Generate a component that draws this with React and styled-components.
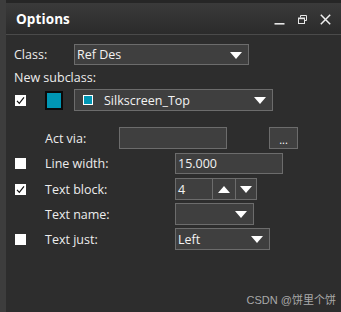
import styled, { createGlobalStyle } from 'styled-components'

const GlobalStyle = createGlobalStyle`
    html, body {
        margin: 0;
        padding: 0;
        background: #2d2d2d;
    }
    body {
        font-family: "Open Sans", "Noto Sans", sans-serif;
        font-size: 12.5px;
        color: #ececec;
    }
`

const Screen = styled.div`
    position: relative;
    display: flex;
    width: 341px;
    height: 312px;
    overflow: hidden;
`

const LeftRail = styled.div`
    width: 6px;
    background: #3d3d3d;
`

const Panel = styled.div`
    flex: 1;
    display: flex;
    flex-direction: column;
    background: #2d2d2d;
    border-top: 3px solid #262626;
`

const TitleBar = styled.div`
    height: 31px;
    display: flex;
    align-items: center;
    justify-content: space-between;
    padding: 0 10px 0 10px;
    background: linear-gradient(#3a3a3a, #2b2b2b);
    border-bottom: 1px solid #4a4a4a;
`

const Title = styled.h2`
    margin: 0;
    font-size: 13.5px;
    font-weight: 700;
    color: #ffffff;
    letter-spacing: 0.1px;
`

const TitleIcons = styled.div`
    display: flex;
    align-items: center;
    gap: 13px;
    padding-top: 2px;
`

const Body = styled.div`
    display: flex;
    flex-direction: column;
    padding: 9px 0 0 8px;
`

const Row = styled.div`
    display: flex;
    align-items: center;
    height: ${p => p.$h || 22}px;
    margin-top: ${p => p.$mt || 0}px;
`

const Label = styled.span`
    box-sizing: border-box;
    width: ${p => (p.$w ? `${p.$w}px` : 'auto')};
    padding-left: ${p => p.$indent || 0}px;
    flex-shrink: 0;
    white-space: nowrap;
`

const CheckCell = styled.div`
    width: 31px;
    flex-shrink: 0;
    display: flex;
    align-items: center;
    padding-left: 1px;
    box-sizing: border-box;
`

const CheckBox = styled.div`
    width: 11px;
    height: 11px;
    background: #ffffff;
    display: flex;
    align-items: center;
    justify-content: center;
`

const Swatch = styled.div`
    width: 14px;
    height: 15px;
    border: 2px solid #0a0a0a;
    background: #0096b4;
    margin-right: 11px;
`

const Field = styled.div`
    position: relative;
    box-sizing: border-box;
    width: ${p => p.$w}px;
    height: ${p => p.$h || 22}px;
    margin-left: ${p => p.$ml || 0}px;
    display: flex;
    align-items: center;
    background: #3f3f3f;
    border: 1px solid #6c6c6c;
    padding-left: 2px;
    color: #f2f2f2;
    font-size: 12.5px;
`

const Arrow = styled.span`
    position: absolute;
    right: 6px;
    top: 50%;
    margin-top: -3px;
    width: 0;
    height: 0;
    border-left: 6px solid transparent;
    border-right: 6px solid transparent;
    border-top: 7px solid #ffffff;
`

const LayerIcon = styled.span`
    width: 8px;
    height: 8px;
    border: 1px solid #ffffff;
    background: #0096b4;
    margin: 0 11px 0 6px;
`

const DotsButton = styled.div`
    box-sizing: border-box;
    width: 29px;
    height: 22px;
    margin-left: 42px;
    background: #404040;
    border: 1px solid #6c6c6c;
    display: flex;
    justify-content: center;
    align-items: flex-end;
    padding-bottom: 3px;
    font-size: 11px;
    line-height: 11px;
    color: #ffffff;
`

const Spinner = styled.div`
    box-sizing: border-box;
    display: flex;
    width: 82px;
    height: 22px;
    border: 1px solid #6c6c6c;
    background: #3f3f3f;
`

const SpinValue = styled.div`
    width: 37px;
    display: flex;
    align-items: center;
    padding-left: 2px;
    box-sizing: border-box;
    border-right: 1px solid #6c6c6c;
    font-size: 12.5px;
    color: #f2f2f2;
`

const SpinButton = styled.div`
    width: ${p => p.$w}px;
    display: flex;
    align-items: center;
    justify-content: center;
    border-right: ${p => (p.$last ? 'none' : '1px solid #6c6c6c')};
`

const Triangle = styled.span`
    width: 0;
    height: 0;
    border-left: 6px solid transparent;
    border-right: 6px solid transparent;
    ${p => (p.$up ? 'border-bottom: 7px solid #ffffff;' : 'border-top: 7px solid #ffffff;')}
`

const Watermark = styled.div`
    position: absolute;
    right: 5px;
    bottom: 5px;
    font-family: "Liberation Sans", "Noto Sans CJK SC", sans-serif;
    font-size: 11px;
    color: #a9a9a9;
`

const Check = () => (
    <svg width="11" height="11" viewBox="0 0 11 11">
        <path d="M2 5.8 L4.3 8.3 L9 2.3" fill="none" stroke="#111" strokeWidth="1.2" />
    </svg>
)

const Box = ({ checked }) => (
    <CheckCell>
        <CheckBox>{checked && <Check />}</CheckBox>
    </CheckCell>
)

const WindowIcons = () => (
    <TitleIcons>
        <svg width="11" height="11" viewBox="0 0 11 11">
            <rect x="0.5" y="9" width="10" height="1.6" fill="#e6e6e6" />
        </svg>
        <svg width="9" height="9" viewBox="0 0 9 9">
            <path d="M2.5 0.5 H8.5 V5.5 H6.5 M2.5 0.5 V2.5" fill="none" stroke="#e6e6e6" strokeWidth="1" />
            <rect x="0.5" y="3" width="6" height="5.5" fill="none" stroke="#e6e6e6" strokeWidth="1" />
            <rect x="0.5" y="3" width="6" height="1.2" fill="#e6e6e6" />
        </svg>
        <svg width="11" height="11" viewBox="0 0 11 11">
            <path d="M0.8 0.8 L10.2 10.2 M10.2 0.8 L0.8 10.2" stroke="#f0f0f0" strokeWidth="1.5" />
        </svg>
    </TitleIcons>
)

const App = () => {
    return (
        <Screen>
            <GlobalStyle />
            <LeftRail />
            <Panel>
                <TitleBar>
                    <Title>Options</Title>
                    <WindowIcons />
                </TitleBar>
                <Body>
                    <Row $h={21}>
                        <Label $w={60}>Class:</Label>
                        <Field $w={175} $h={21}>
                            Ref Des
                            <Arrow />
                        </Field>
                    </Row>
                    <Row $h={16} $mt={4}>
                        <Label>New subclass:</Label>
                    </Row>
                    <Row $mt={4}>
                        <Box checked />
                        <Swatch />
                        <Field $w={199}>
                            <LayerIcon />
                            Silkscreen_Top
                            <Arrow />
                        </Field>
                    </Row>
                    <Row $mt={16}>
                        <Label $w={105} $indent={31}>Act via:</Label>
                        <Field $w={108} />
                        <DotsButton>...</DotsButton>
                    </Row>
                    <Row $h={21} $mt={4}>
                        <Box />
                        <Label $w={130}>Line width:</Label>
                        <Field $w={108} $h={21}>15.000</Field>
                    </Row>
                    <Row $mt={4}>
                        <Box checked />
                        <Label $w={130}>Text block:</Label>
                        <Spinner>
                            <SpinValue>4</SpinValue>
                            <SpinButton $w={23}><Triangle $up /></SpinButton>
                            <SpinButton $w={20} $last><Triangle /></SpinButton>
                        </Spinner>
                    </Row>
                    <Row $mt={3}>
                        <Label $w={161} $indent={31}>Text name:</Label>
                        <Field $w={79}>
                            <Arrow />
                        </Field>
                    </Row>
                    <Row $mt={3}>
                        <Box />
                        <Label $w={130}>Text just:</Label>
                        <Field $w={95}>
                            Left
                            <Arrow />
                        </Field>
                    </Row>
                </Body>
            </Panel>
            <Watermark>CSDN @饼里个饼</Watermark>
        </Screen>
    )
}

export default App
